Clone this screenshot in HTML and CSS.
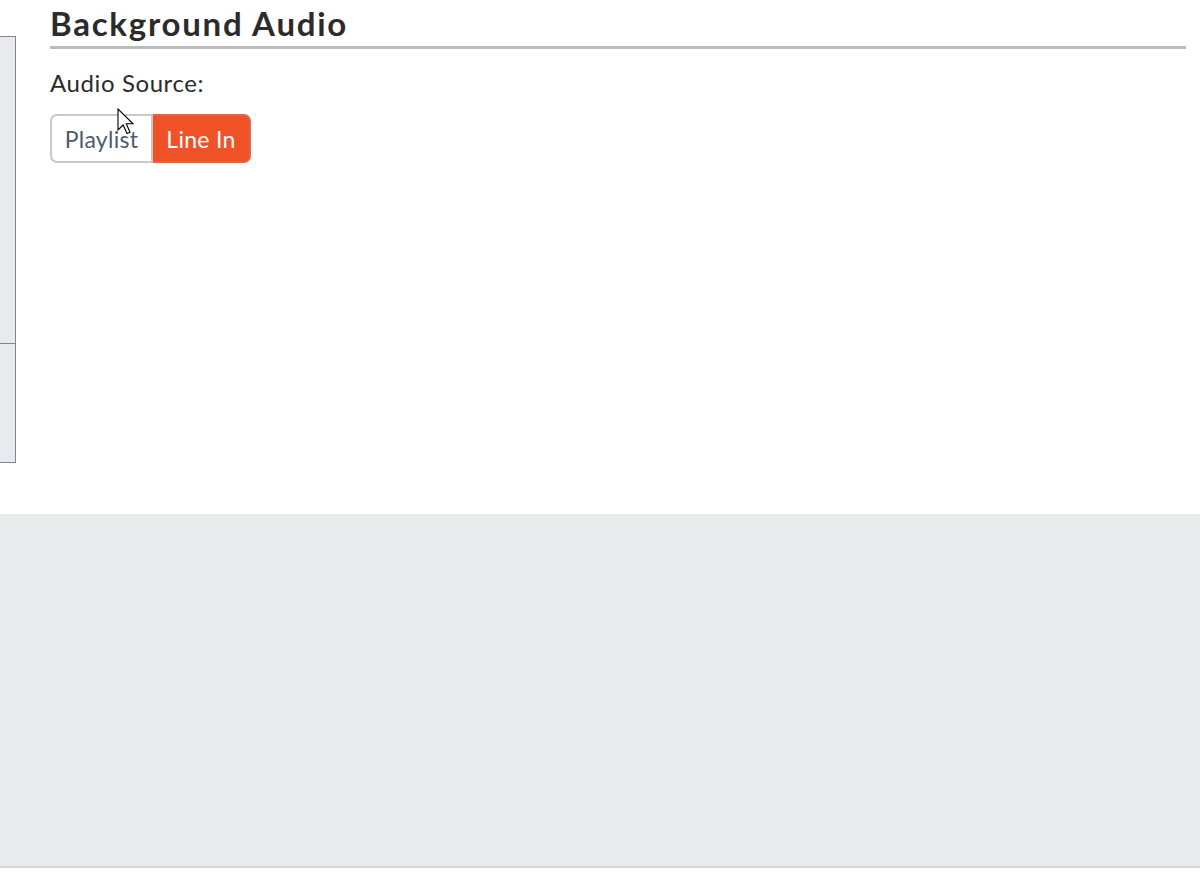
FILE: index.html
```html
<!DOCTYPE html>
<html>
<head>
<meta charset="utf-8">
<link rel="stylesheet" href="styles.css">
</head>
<body>
<div class="page">
  <div class="main">
    <div class="sidebar">
      <div class="side-top"></div>
      <div class="side-bottom"></div>
    </div>
    <div class="content">
      <h2 class="title">Background Audio</h2>
      <div class="label">Audio Source:</div>
      <div class="toggle">
        <button class="opt">Playlist</button>
        <button class="opt active">Line In</button>
      </div>
    </div>
  </div>
  <div class="footer"></div>
  <div class="bottom"></div>
  <svg class="cursor" width="18" height="28" viewBox="0 0 18 28">
    <path d="M1 1 L1 22 L6.2 17 L10 25.5 L13 24.2 L9.3 15.8 L16 15.8 Z" fill="#fff" stroke="#000" stroke-width="1.1" stroke-linejoin="miter"/>
  </svg>
</div>
</body>
</html>
```
FILE: styles.css
```css
* { box-sizing: border-box; }
html, body { margin: 0; padding: 0; background: #fff; }
body { font-family: Lato, "Noto Sans", sans-serif; color: #2b2b2b; }
.page { position: relative; width: 1200px; height: 872px; overflow: hidden; }
.main { height: 514px; display: flex; background: #fff; }
.sidebar {
  width: 16px; margin-top: 36px; height: 427px;
  display: flex; flex-direction: column;
  border: 1px solid #80849a; border-left: none;
  background: #e9eaee;
}
.side-top { height: 307px; border-bottom: 1px solid #80849a; }
.side-bottom { flex: 1; }
.content { flex: 1; padding-left: 34px; padding-right: 14px; }
.title {
  margin: 0; padding-top: 2px; height: 49px;
  font-size: 33px; font-weight: 700; color: #2b2b2b; letter-spacing: 1.75px;
  border-bottom: 3px solid #bbbbbb; line-height: 42px;
}
.label { margin-top: 20px; font-size: 24px; line-height: 28px; color: #2b2b2b; letter-spacing: 0.6px; }
.toggle { display: flex; margin-top: 17px; }
.opt {
  font-family: Lato, "Noto Sans", sans-serif;
  font-size: 23px; height: 49px; padding: 0 10px;
  border: 2px solid #c9c9c9; background: #fff; color: #505a6e;
  border-radius: 7px 0 0 7px; margin: 0; cursor: pointer;
  width: 103px; letter-spacing: 0.3px;
}
.opt.active {
  background: #f05228; color: #fff; border-color: #e0654a;
  border-radius: 0 7px 7px 0; width: 98px; border-left: none;
}
.footer { height: 354px; background: #e9eaec; border-bottom: 2px solid #d6d7d9; }
.bottom { height: 4px; background: #fff; }
.cursor { position: absolute; left: 117px; top: 108px; }
```
